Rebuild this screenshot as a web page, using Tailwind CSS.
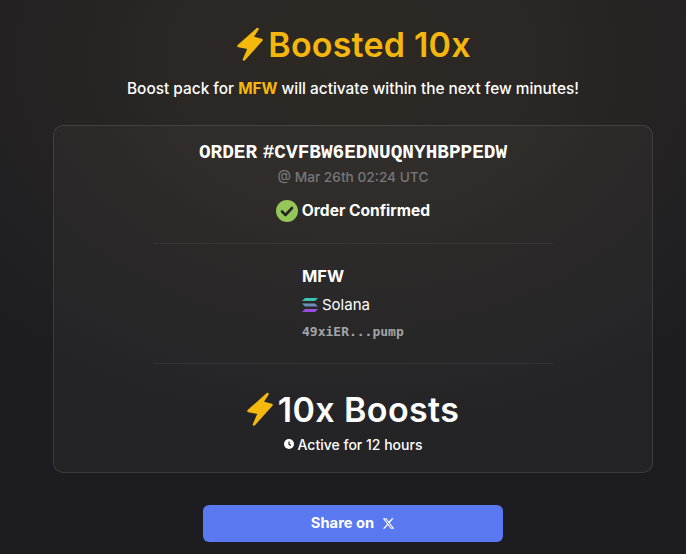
<!DOCTYPE html>
<html lang="en">
<head>
    <meta charset="UTF-8">
    <title>Boosted 10x</title>
    <script src="https://cdn.jsdelivr.net/npm/@tailwindcss/browser@4"></script>
</head>
<body class="bg-[#1d1d21] font-['Inter',sans-serif] text-white">
<div class="h-[554px] w-[686px] pl-[20px] overflow-hidden bg-[radial-gradient(ellipse_500px_370px_at_353px_60px,#2d2924_0%,#2a2724_35%,#1d1d21_100%)] flex flex-col items-center">
    <!-- Title -->
    <div class="mt-[23px] h-[42px] flex items-center text-[#f5b60d]">
        <svg class="w-[30px] h-[36px] mr-[3px]" viewBox="0 0 30 36"><path d="M22.500 3L3.500 20L14 22L9 33.500L26.500 14L17 11.500Z" fill="#f5b90d" stroke="#f5b90d" stroke-width="2.500" stroke-linejoin="round"/></svg>
        <span class="text-[34px] font-semibold tracking-[0.2px]">Boosted 10x</span>
    </div>
    <p class="mt-[12px] text-[15.400px] font-medium leading-[24px]">Boost pack for <span class="font-bold text-[#f5b60d]">MFW</span> will activate within the next few minutes!</p>

    <!-- Order card -->
    <div class="mt-[24px] w-[600px] h-[348px] rounded-[10px] border border-white/10 bg-white/[0.03] flex flex-col items-center">
        <h2 class="mt-[15px] font-['Liberation_Mono',monospace] text-[19.400px] leading-[24px] font-bold [word-spacing:-6px]">ORDER #CVFBW6EDNUQNYHBPPEDW</h2>
        <p class="mt-[2px] text-[13.700px] leading-[20px] font-medium text-[#77777a]">@ Mar 26th 02:24 UTC</p>
        <div class="mt-[12px] flex items-center gap-[4px] h-[24px]">
            <svg class="w-[22px] h-[22px]" viewBox="0 0 22 22"><circle cx="11" cy="11" r="11" fill="#94c758"/><path d="M6 11.500l3.500 3.500 6.500-7" fill="none" stroke="#26262a" stroke-width="2.600" stroke-linecap="round" stroke-linejoin="round"/></svg>
            <span class="text-[15.600px] font-bold">Order Confirmed</span>
        </div>
        <div class="mt-[20px] w-[400px] border-t border-white/5"></div>

        <div class="mt-[21px] w-full pl-[248px]">
            <div class="text-[16.500px] leading-[22px] font-bold">MFW</div>
            <div class="mt-[8px] flex items-center gap-[4px] h-[20px]">
                <svg class="w-[16px] h-[14px]" viewBox="0 0 16 14">
                    <defs><linearGradient id="sol" x1="0" y1="0" x2="0" y2="1"><stop offset="0" stop-color="#2fd3b0"/><stop offset="0.5" stop-color="#6d8fbe"/><stop offset="1" stop-color="#a63de8"/></linearGradient></defs>
                    <path d="M3 0h13l-3 3H0zM0 5.500h13l3 3H3zM3 11h13l-3 3H0z" fill="url(#sol)"/>
                </svg>
                <span class="text-[15px] font-normal">Solana</span>
            </div>
            <div class="mt-[8px] font-['DejaVu_Sans_Mono',monospace] text-[13px] leading-[18px] font-bold text-[#a5a5a8]">49xiER...pump</div>
        </div>
        <div class="mt-[22px] w-[400px] border-t border-white/5"></div>

        <div class="mt-[24px] flex items-center h-[42px] -ml-[2px]">
            <svg class="w-[30px] h-[36px] mr-[3px]" viewBox="0 0 30 36"><path d="M22.500 3L3.500 20L14 22L9 33.500L26.500 14L17 11.500Z" fill="#f5b90d" stroke="#f5b90d" stroke-width="2.500" stroke-linejoin="round"/></svg>
            <span class="text-[34px] font-semibold tracking-[0.400px]">10x Boosts</span>
        </div>
        <div class="mt-[3px] flex items-center gap-[4px] h-[22px]">
            <svg class="w-[10px] h-[10px]" viewBox="0 0 10 10"><circle cx="5" cy="5" r="5" fill="#fff"/><path d="M5 2.500V5.300L7 6.500" fill="none" stroke="#232327" stroke-width="1.200"/></svg>
            <span class="text-[14px] font-medium">Active for 12 hours</span>
        </div>
    </div>

    <!-- Share -->
    <button class="mt-[32px] w-[300px] h-[37px] rounded-[6px] bg-[#5a78f0] flex items-center justify-center gap-[8px] text-[14.700px] font-bold">
        Share on
        <svg class="w-[13px] h-[13px]" viewBox="0 0 24 24" fill="#fff"><path d="M18.244 2.250h3.308l-7.227 8.260 8.502 11.240H16.170l-5.214-6.817L4.990 21.750H1.680l7.730-8.835L1.254 2.250H8.080l4.713 6.231zm-1.161 17.520h1.833L7.084 4.126H5.117z"/></svg>
    </button>
</div>
</body>
</html>
